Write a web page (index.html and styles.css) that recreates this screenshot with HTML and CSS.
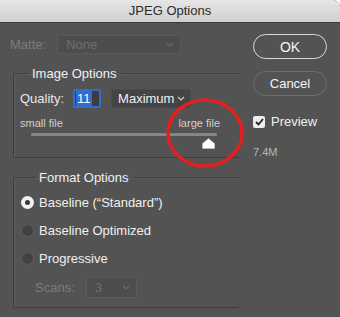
FILE: index.html
```html
<!DOCTYPE html>
<html lang="en">
<head>
    <meta charset="UTF-8">
    <title>JPEG Options</title>
    <link rel="stylesheet" href="styles.css">
</head>
<body>
    <div class="window">
        <div class="titlebar">JPEG Options</div>

        <div class="content">
            <div class="main">
                <div class="matte-row">
                    <span class="label disabled">Matte:</span>
                    <div class="select select-wide disabled">
                        <span>None</span>
                        <svg class="chevron" width="8" height="5" viewBox="0 0 8 5"><path d="M1 1 L4 4 L7 1" fill="none" stroke="currentColor" stroke-width="1.2"/></svg>
                    </div>
                </div>

                <fieldset class="group group-image">
                    <legend>Image Options</legend>
                    <div class="quality-row">
                        <span class="label">Quality:</span>
                        <div class="num-input"><span class="selected-text">11</span></div>
                        <div class="select select-quality">
                            <span>Maximum</span>
                            <svg class="chevron" width="8" height="5" viewBox="0 0 8 5"><path d="M1 1 L4 4 L7 1" fill="none" stroke="currentColor" stroke-width="1.2"/></svg>
                        </div>
                    </div>
                    <div class="size-labels">
                        <span>small file</span>
                        <span>large file</span>
                    </div>
                    <div class="slider">
                        <div class="track"></div>
                        <svg class="thumb" width="13" height="11" viewBox="0 0 13 11"><path d="M6.5 0.5 L12.5 5.5 L12.5 10.5 L0.5 10.5 L0.5 5.5 Z" fill="#fff" stroke="#cfcfcf" stroke-width="0.5"/></svg>
                    </div>
                </fieldset>

                <fieldset class="group group-format">
                    <legend>Format Options</legend>
                    <label class="radio-row"><span class="radio checked"></span>Baseline (“Standard”)</label>
                    <label class="radio-row"><span class="radio"></span>Baseline Optimized</label>
                    <label class="radio-row"><span class="radio"></span>Progressive</label>
                    <div class="scans-row">
                        <span class="label disabled">Scans:</span>
                        <div class="select select-scans disabled">
                            <span>3</span>
                            <svg class="chevron" width="8" height="5" viewBox="0 0 8 5"><path d="M1 1 L4 4 L7 1" fill="none" stroke="currentColor" stroke-width="1.2"/></svg>
                        </div>
                    </div>
                </fieldset>
            </div>

            <div class="side">
                <button class="btn btn-default">OK</button>
                <button class="btn">Cancel</button>
                <label class="check-row">
                    <span class="checkbox">
                        <svg width="9" height="8" viewBox="0 0 9 8"><path d="M1 4 L3.5 6.5 L8 1" fill="none" stroke="#222" stroke-width="1.8"/></svg>
                    </span>
                    Preview
                </label>
                <div class="file-size">7.4M</div>
            </div>
        </div>

        <!-- red annotation circle drawn over the slider -->
        <svg class="annotation" width="82" height="74" viewBox="0 0 82 74">
            <ellipse cx="41" cy="37" rx="37" ry="33" fill="none" stroke="#e3201f" stroke-width="3.5"/>
        </svg>
    </div>
</body>
</html>
```

FILE: styles.css
```css
:root {
    --bg-color: #535353;
    --text-color: #f0f0f0;
    --dim-text: #7c7c7c;
    --field-bg: #484848;
    --group-line: #3e3e3e;
    --ui-font: 'Liberation Sans', Arial, sans-serif;
}

body {
    margin: 0;
    padding: 0;
    background: #fff;
    font-family: var(--ui-font);
    font-size: 13px;
    color: var(--text-color);
}

.window {
    position: relative;
    width: 340px;
    height: 317px;
    background-color: var(--bg-color);
    border-top-right-radius: 7px;
    overflow: hidden;
}

.titlebar {
    height: 22px;
    line-height: 22px;
    text-align: center;
    color: #2c2c2c;
    font-size: 13px;
    background: linear-gradient(#e6e6e6, #cfcfcf);
    border-bottom: 1px solid #3a3a3a;
}

.content {
    display: grid;
    grid-template-columns: 240px 1fr;
}

.label {
    color: #e8e8e8;
}

.disabled {
    color: var(--dim-text);
}

/* select boxes */
.select {
    display: flex;
    align-items: center;
    justify-content: space-between;
    box-sizing: border-box;
    height: 19px;
    padding: 0 6px 0 8px;
    background-color: var(--field-bg);
    border: 1px solid #5a5a5a;
    border-radius: 3px;
    color: #f0f0f0;
}

.select.disabled {
    color: #6f6f6f;
    background-color: #4d4d4d;
}

.chevron {
    color: #cfcfcf;
}

.select.disabled .chevron {
    color: #6a6a6a;
}

.matte-row {
    display: flex;
    align-items: center;
    gap: 11px;
    padding: 12px 0 0 10px;
}

.select-wide {
    width: 124px;
}

/* group boxes */
.group {
    margin: 0 0 0 13px;
    padding: 0;
    width: 226px;
    box-sizing: border-box;
    border: 1px solid var(--group-line);
    border-right-color: #505050;
    box-shadow: inset 1px 1px 0 #5c5c5c;
}

.group legend {
    margin-left: 14px;
    padding: 0 4px;
    font-size: 13px;
    color: #f0f0f0;
}

.group-image {
    margin-top: 12px;
    height: 92px;
}

.quality-row {
    display: flex;
    align-items: center;
    padding: 8px 0 0 6px;
}

.num-input {
    display: flex;
    align-items: center;
    box-sizing: border-box;
    width: 28px;
    height: 19px;
    margin-left: 9px;
    padding-left: 1px;
    background-color: #3d3d3d;
    border: 2px solid #2d6fd0;
    border-radius: 2px;
}

.selected-text {
    background-color: #2f6bd1;
    color: #fff;
    padding: 0 1px;
    line-height: 15px;
}

.select-quality {
    width: 80px;
    margin-left: 10px;
    padding: 0 5px 0 6px;
    background-color: #444;
    border-color: #4a4a4a;
}

.size-labels {
    display: flex;
    justify-content: space-between;
    padding: 9px 18px 0 6px;
    font-size: 11px;
    color: #cfcfcf;
}

.slider {
    position: relative;
    height: 14px;
    margin: 2px 0 0 17px;
    width: 186px;
}

.track {
    margin-top: 4px;
    height: 3px;
    background-color: #858585;
    border-radius: 1px;
}

.thumb {
    position: absolute;
    left: 171px;
    top: 5px;
}

.group-format {
    margin-top: 12px;
    height: 138px;
    padding: 3px 0 0 7px;
}

.radio-row {
    display: flex;
    align-items: center;
    gap: 5px;
    height: 28px;
    font-size: 13px;
    color: #f0f0f0;
}

.radio {
    box-sizing: border-box;
    width: 13px;
    height: 13px;
    border-radius: 50%;
    border: 1px solid #5e5e5e;
    background-color: #424242;
}

.radio.checked {
    border: 4px solid #f2f2f2;
    box-shadow: inset 0 0 0 2px #3a3a3a;
    background-color: #2f2f2f;
}

.scans-row {
    display: flex;
    align-items: center;
    gap: 11px;
    padding: 5px 0 0 14px;
}

.select-scans {
    width: 51px;
    height: 21px;
}

/* right side */
.side {
    display: flex;
    flex-direction: column;
    padding: 11px 0 0 13px;
}

.btn {
    box-sizing: border-box;
    width: 74px;
    height: 25px;
    background: transparent;
    border: 1.5px solid #6e6e6e;
    border-radius: 13px;
    color: #f5f5f5;
    font-family: var(--ui-font);
    font-size: 13px;
    padding: 0;
}

.btn + .btn {
    margin-top: 12px;
}

.btn-default {
    border: 1.5px solid #d8d8d8;
    font-size: 14px;
}

.check-row {
    display: flex;
    align-items: center;
    gap: 6px;
    margin-top: 18px;
    font-size: 13px;
    color: #f0f0f0;
}

.checkbox {
    display: flex;
    align-items: center;
    justify-content: center;
    width: 12px;
    height: 12px;
    background-color: #ededed;
    border-radius: 2px;
}

.file-size {
    margin-top: 17px;
    font-size: 11px;
    color: #b8b8b8;
}

.annotation {
    position: absolute;
    left: 164px;
    top: 96px;
}
```
